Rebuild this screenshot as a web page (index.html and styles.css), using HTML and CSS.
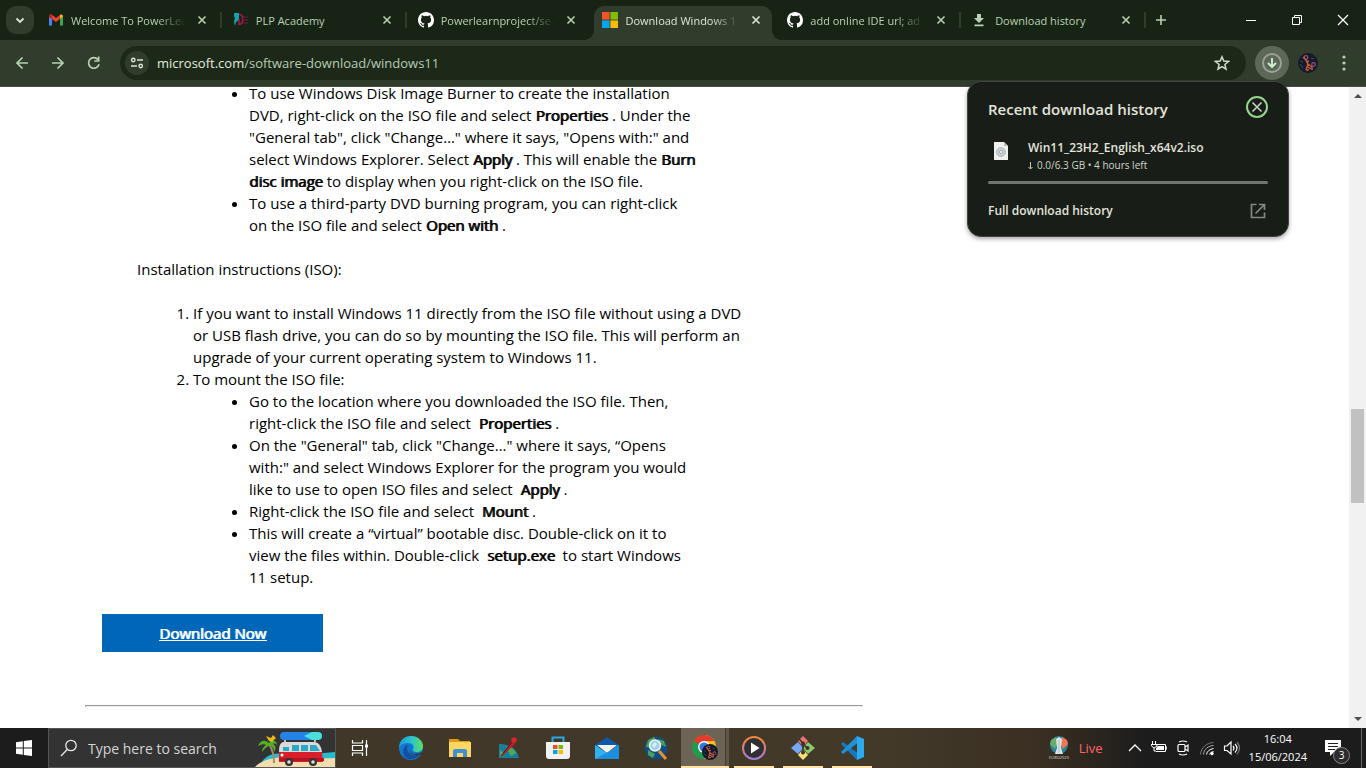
FILE: index.html
```html
<!DOCTYPE html>
<html lang="en">
<head>
<meta charset="utf-8">
<title>Download Windows 11</title>
<link rel="stylesheet" href="styles.css">
</head>
<body>
<svg class="defs" aria-hidden="true">
  <symbol id="github" viewBox="0 0 16 16"><path fill="#fff" d="M8 0C3.58 0 0 3.58 0 8c0 3.54 2.29 6.53 5.47 7.59.4.07.55-.17.55-.38 0-.19-.01-.82-.01-1.49-2.01.37-2.53-.49-2.69-.94-.09-.23-.48-.94-.82-1.13-.28-.15-.68-.52-.01-.53.63-.01 1.08.58 1.23.82.72 1.21 1.87.87 2.33.66.07-.52.28-.87.51-1.07-1.78-.2-3.64-.89-3.64-3.95 0-.87.31-1.59.82-2.15-.08-.2-.36-1.02.08-2.12 0 0 .67-.21 2.2.82a7.6 7.6 0 0 1 4 0c1.53-1.04 2.2-.82 2.2-.82.44 1.1.16 1.92.08 2.12.51.56.82 1.27.82 2.15 0 3.07-1.87 3.75-3.65 3.95.29.25.54.73.54 1.48 0 1.07-.01 1.93-.01 2.2 0 .21.15.46.55.38A8.01 8.01 0 0 0 16 8c0-4.42-3.58-8-8-8z"/></symbol>
  <symbol id="close" viewBox="0 0 16 16"><path d="M4.500 4.500l7 7m0-7l-7 7" stroke="currentColor" stroke-width="1.600" fill="none"/></symbol>
  <symbol id="avatar" viewBox="0 0 20 20"><circle cx="10" cy="10" r="10" fill="#161a2a"/><circle cx="8" cy="4.500" r="1.800" fill="none" stroke="#a04f74" stroke-width="1.200"/><circle cx="15.500" cy="11.500" r="1.800" fill="none" stroke="#a04f74" stroke-width="1.200"/><path d="M5 4l3 3 2 4-2 6M10 11l4 3v3M8 17h3M8 9l3-1m-1 6l3 2" fill="none" stroke="#c65f38" stroke-width="1.500"/><path d="M2 11l3 4m8-10l3 1M3 8l2 2" stroke="#31506c"/></symbol>
</svg>

<header class="tabstrip">
  <button class="tab-search" aria-label="Search tabs"><svg width="12" height="12" viewBox="0 0 12 12"><path d="M2.500 4.500L6 8l3.500-3.500" fill="none" stroke="#dbe6d6" stroke-width="1.800"/></svg></button>
  <nav class="tabs">
    <div class="tab">
      <svg class="fav" viewBox="0 0 16 16"><path fill="#4285f4" d="M1 4v9.500h3V7z"/><path fill="#34a853" d="M12 7v6.500h3V4z"/><path fill="#ea4335" d="M1 4.500C1 2.500 3 2 4.200 3L8 6l3.800-3v4L8 10 1 5z"/><path fill="#c5221f" d="M1 4.500C1 2.500 3 2 4 3v4.200L1 5z"/><path fill="#fbbc04" d="M12 2.900c1.500-1 3 0 3 1.600L12 7z"/></svg>
      <span class="title fade">Welcome To PowerLea</span><button class="x" aria-label="Close tab"><svg width="16" height="16"><use href="#close"/></svg></button>
    </div>
    <div class="tab">
      <svg class="fav" viewBox="0 0 16 16"><path fill="#12a4ac" d="M1 1h5v7L3 10l-1 4-1-5 1-3-1-2z"/><path d="M6 2.500c5 0 5 9 0 10V7" fill="none" stroke="#a01850" stroke-width="1.600"/><path d="M10 5h5M11 8h4m-5 3h5" stroke="#731940"/></svg>
      <span class="title">PLP Academy</span><button class="x" aria-label="Close tab"><svg width="16" height="16"><use href="#close"/></svg></button>
    </div>
    <div class="tab before-active">
      <svg class="fav"><use href="#github"/></svg>
      <span class="title fade">Powerlearnproject/se-</span><button class="x" aria-label="Close tab"><svg width="16" height="16"><use href="#close"/></svg></button>
    </div>
    <div class="tab active">
      <svg class="fav" viewBox="0 0 16 16"><path fill="#f35325" d="M0 0h7.600v7.600H0z"/><path fill="#81bc06" d="M8.400 0H16v7.600H8.400z"/><path fill="#05a6f0" d="M0 8.400h7.600V16H0z"/><path fill="#ffba08" d="M8.400 8.400H16V16H8.400z"/></svg>
      <span class="title fade">Download Windows 1</span><button class="x" aria-label="Close tab"><svg width="16" height="16"><use href="#close"/></svg></button>
    </div>
    <div class="tab">
      <svg class="fav"><use href="#github"/></svg>
      <span class="title fade">add online IDE url; ad</span><button class="x" aria-label="Close tab"><svg width="16" height="16"><use href="#close"/></svg></button>
    </div>
    <div class="tab">
      <svg class="fav" viewBox="0 0 16 16"><path fill="#b9d0b3" d="M5 2h4v4h3L7 11 2 6h3zM2.500 12.500h9v1.800h-9z"/></svg>
      <span class="title">Download history</span><button class="x" aria-label="Close tab"><svg width="16" height="16"><use href="#close"/></svg></button>
    </div>
  </nav>
  <button class="new-tab" aria-label="New tab"><svg width="12" height="12" viewBox="0 0 12 12"><path d="M6 1v10M1 6h10" stroke="#b9d0b3" stroke-width="1.600"/></svg></button>
  <div class="window-controls">
    <button aria-label="Minimize"><svg width="12" height="12"><path d="M1 6.500h10" stroke="#fff"/></svg></button>
    <button aria-label="Restore"><svg width="12" height="12"><path d="M1.500 3.500h7v7h-7zM3.500 3v-1.500h7v7H9" fill="none" stroke="#fff"/></svg></button>
    <button aria-label="Close"><svg width="12" height="12"><path d="M1 1l10 10M11 1L1 11" stroke="#fff" stroke-width="1.200"/></svg></button>
  </div>
</header>

<div class="toolbar">
  <div class="nav-buttons">
    <button aria-label="Back"><svg width="16" height="16"><path d="M14 8H3m5.500-5.500L3 8l5.500 5.500" fill="none" stroke="#b9d0b3" stroke-width="1.700"/></svg></button>
    <button aria-label="Forward"><svg width="16" height="16"><path d="M2 8h11M7.500 2.500L13 8l-5.500 5.500" fill="none" stroke="#b9d0b3" stroke-width="1.700"/></svg></button>
    <button aria-label="Reload"><svg width="16" height="16"><path d="M13 9.200A5.300 5.300 0 1 1 12 4.600" fill="none" stroke="#b9d0b3" stroke-width="1.700"/><path d="M13.500 1.500v5.300H8.300V5.200h3.600V1.500z" fill="#b9d0b3"/></svg></button>
  </div>
  <div class="omnibox">
    <button class="site-info" aria-label="View site information"><svg width="14" height="14" viewBox="0 0 14 14"><path d="M7 4h6M1 10h6" stroke="#dbe6d6" stroke-width="1.600"/><circle cx="3.300" cy="4" r="1.700" fill="none" stroke="#dbe6d6" stroke-width="1.400"/><circle cx="10.700" cy="10" r="1.700" fill="none" stroke="#dbe6d6" stroke-width="1.400"/></svg></button>
    <div class="url"><span class="host">microsoft.com</span>/software-download/windows11</div>
    <button class="star" aria-label="Bookmark this tab"><svg width="16" height="16" viewBox="0 0 16 16"><path d="M8 1.800l1.800 4.300 4.700.4-3.600 3 1.100 4.600L8 11.600l-4 2.500 1.100-4.600-3.600-3 4.700-.4z" fill="none" stroke="#d0dccb" stroke-width="1.500"/></svg></button>
  </div>
  <div class="tools">
    <button class="downloads" aria-label="Downloads"><svg width="20" height="20" viewBox="0 0 20 20"><circle cx="10" cy="10" r="9" fill="none" stroke="#99a397" stroke-width="2"/><path d="M10 5v9M6 10l4 4 4-4" fill="none" stroke="#d4f3d5" stroke-width="1.800"/></svg></button>
    <button class="profile" aria-label="Profile"><svg width="20" height="20"><use href="#avatar"/></svg></button>
    <button class="menu" aria-label="Menu"><svg width="4" height="16" fill="#b9d0b3"><circle cx="2" cy="2" r="1.600"/><circle cx="2" cy="8" r="1.600"/><circle cx="2" cy="14" r="1.600"/></svg></button>
  </div>
</div>

<div class="viewport">
  <main class="page">
    <article class="article">
      <ul class="inner">
        <li>To use Windows Disk Image Burner to create the installation<br>DVD, right-click on the ISO file and select <b>Properties</b> . Under the<br>"General tab", click "Change…" where it says, "Opens with:" and<br>select Windows Explorer. Select <b>Apply</b> . This will enable the <b>Burn<br>disc image</b> to display when you right-click on the ISO file.</li>
        <li>To use a third-party DVD burning program, you can right-click<br>on the ISO file and select <b>Open with</b> .</li>
      </ul>
      <p>Installation instructions (ISO):</p>
      <ol>
        <li>If you want to install Windows 11 directly from the ISO file without using a DVD<br>or USB flash drive, you can do so by mounting the ISO file. This will perform an<br>upgrade of your current operating system to Windows 11.</li>
        <li>To mount the ISO file:
          <ul>
            <li>Go to the location where you downloaded the ISO file. Then,<br>right-click the ISO file and select&nbsp; <b>Properties</b> .</li>
            <li>On the "General" tab, click "Change…" where it says, “Opens<br>with:" and select Windows Explorer for the program you would<br>like to use to open ISO files and select&nbsp; <b>Apply</b> .</li>
            <li>Right-click the ISO file and select&nbsp; <b>Mount</b> .</li>
            <li>This will create a “virtual” bootable disc. Double-click on it to<br>view the files within. Double-click&nbsp; <b>setup.exe</b>&nbsp; to start Windows<br>11 setup.</li>
          </ul>
        </li>
      </ol>
    </article>
    <a class="download-now" href="#">Download Now</a>
    <hr>
  </main>
  <div class="scrollbar" aria-hidden="true"><svg width="8" height="4"><path d="M0 4l4-4 4 4z" fill="#505050"/></svg><div class="track"><div class="thumb"></div></div><svg width="8" height="4"><path d="M0 0l4 4 4-4z" fill="#505050"/></svg></div>
</div>

<section class="popup" aria-label="Recent download history">
  <div class="popup-head"><h2>Recent download history</h2><button aria-label="Close"><svg width="22" height="22"><circle cx="11" cy="11" r="10" fill="none" stroke="#97d48f" stroke-width="2"/><path d="M6.500 6.500l9 9m0-9l-9 9" stroke="#c9d1c6" stroke-width="1.600"/></svg></button></div>
  <div class="file">
    <svg width="14" height="18" viewBox="0 0 14 18"><path d="M0 0h10l4 4v14H0z" fill="#f0f0ee"/><path d="M10 0v4h4z" fill="#b9b9b9"/><circle cx="7" cy="10" r="4.500" fill="#c8cfd2" stroke="#9aa2a6" stroke-width=".6"/><circle cx="7" cy="10" r="1.600" fill="#edf1f1" stroke="#8c9499" stroke-width=".6"/></svg>
    <div><div class="file-name">Win11_23H2_English_x64v2.iso</div><div class="file-status"><svg width="5" height="8"><path d="M2.500 0v7M.5 5l2 2 2-2" fill="none" stroke="#c3cbbf"/></svg>0.0/6.3 GB • 4 hours left</div></div>
  </div>
  <div class="progress"></div>
  <a class="full" href="#">Full download history<svg width="16" height="16"><path d="M6.500 1.500h-5v13h13v-5M9 1.500h5.500V7M14 2L5.500 10.500" fill="none" stroke="#858985" stroke-width="1.700"/></svg></a>
</section>

<footer class="taskbar">
  <button class="start" aria-label="Start"><svg width="16" height="16" fill="#fff"><path d="M0 2.200l6.800-.9v6.200H0zM7.800 1.100L16 0v7.500H7.800zM0 8.500h6.800v6.200L0 13.800zM7.800 8.500H16V16l-8.200-1.100z"/></svg></button>
  <label class="search">
    <svg class="lens" width="18" height="18"><circle cx="11" cy="6.500" r="5.200" fill="none" stroke="#e8e8e8" stroke-width="1.300"/><path d="M7.200 10.500L1 17" stroke="#e8e8e8" stroke-width="1.300"/></svg>
    <input type="text" placeholder="Type here to search" aria-label="Type here to search">
    <svg class="van" width="80" height="38" viewBox="0 0 80 38">
      <path d="M4 38C10 24 22 22 36 27l44-4v15z" fill="#25bcd0"/><path d="M0 38c8-9 24-10 36-10 20 0 30 2 44 1v9z" fill="#f3dcae"/>
      <path d="M14 15c4 6 5 12 5 19" fill="none" stroke="#a58a66" stroke-width="2"/>
      <path d="M14 14C9 10 5 12 3 17c4-2 6-2 8-1-3 2-4 4-4 7 3-4 5-5 8-7 3 2 4 4 4 7 3-4 1-7-1-8 2-1 3 0 4 1 0-4-3-5-6-4z" fill="#53ae24"/><path d="M14 12l-3-5 5 2 2-3 3 3-4 4z" fill="#e8bc18"/>
      <path d="M30 10v4m30-4v4" stroke="#bbb" stroke-width="2"/>
      <rect x="25" y="3" width="42" height="8" rx="4" fill="#2483e6"/><path d="M49 7l8-4h5q5 0 5 4t-5 4h-5z" fill="#4be1d8"/>
      <path d="M24 24c0-9 2-11 6-11h28c6 0 8 4 9 11l1 9H24z" fill="#d9202a"/><path d="M24 23c0-8 2-10 6-10h28c6 0 8 4 9 10z" fill="#d8dcdd"/>
      <path d="M37 16h7v6h-7zM46 16h7v6h-7zM55 16h6l4 6H55zM28 18h6v4h-6z" fill="#2ba9c4"/>
      <path d="M24 29h45v3H24z" fill="#b51420"/><circle cx="27" cy="26" r="1.500" fill="#fff"/>
      <circle cx="34" cy="33" r="4" fill="#333"/><circle cx="34" cy="33" r="1.800" fill="#ddd"/><circle cx="58" cy="33" r="4" fill="#333"/><circle cx="58" cy="33" r="1.800" fill="#ddd"/>
    </svg>
  </label>
  <nav class="apps">
    <button class="task-view" aria-label="Task View"><svg width="18" height="18" fill="none" stroke="#fff" stroke-width="1.200"><path d="M1.500 1v3h10V1M1.500 17v-3h10v3M1.500 6.500h10v5h-10zM15.500 1v16"/><path d="M14 5.500h3v3h-3z" fill="#fff" stroke="none"/></svg></button>
    <button aria-label="Edge"><svg width="24" height="24" viewBox="0 0 24 24"><defs><linearGradient id="e1"><stop stop-color="#1699df"/><stop offset=".6" stop-color="#31c9c1"/><stop offset="1" stop-color="#64dd58"/></linearGradient></defs><circle cx="12" cy="12" r="12" fill="#1175d1"/><path d="M0 12C0 4 6 0 12 0c7 0 12 5 12 10 0 4-3 6-6 6s-5-1-4-3c2-3-1-6-5-6-5 0-8 3-9 5z" fill="url(#e1)"/><path d="M8 12c0 5 5 8 10 7 2 0 3-1 4-2-3 5-8 7-12 6-5-1-7-7-5-11 1-2 3-3 5-3-1 1-2 2-2 3z" fill="#124f9c"/><path d="M11 10c-2 3 0 7 5 8 3 0 5-1 7-2l1 2-3 1c-7 1-13-3-10-9z" fill="#403728"/></svg></button>
    <button aria-label="File Explorer"><svg width="22" height="20" viewBox="0 0 22 20"><path d="M0 1h9l2 2h10v7H0z" fill="#dc9909"/><path d="M0 4h22v15H0z" fill="#ffd564"/><path d="M4 19v-6q0-2 2-2h10q2 0 2 2v6h-4v-4H8v4z" fill="#3b91d8"/></svg></button>
    <button aria-label="Map tool"><svg width="22" height="24" viewBox="0 0 22 24"><path d="M1 8c8 0 17 2 20 14H1z" fill="#187f9b"/><path d="M8 11c4-1 8 2 10 6l-5 3-3-5zM2 14l4 3-4 4z" fill="#56a55a"/><path d="M2 22L13 6l3-4 3 2-3 5z" fill="#bd1d24"/><circle cx="16" cy="4" r="2.700" fill="#d7252c"/><path d="M3 20L14 6" stroke="#60161c"/></svg></button>
    <button aria-label="Microsoft Store"><svg width="24" height="24" viewBox="0 0 24 24"><path d="M6.500 8V1.500h11V8" fill="none" stroke="#29a7df" stroke-width="2"/><path d="M0 6h24v14q0 3-3 3H3q-3 0-3-3z" fill="#f1f1f1"/><path fill="#f25022" d="M7 9h4.500v4H7z"/><path fill="#7fba00" d="M12.500 9H17v4h-4.500z"/><path fill="#00a4ef" d="M7 14h4.500v4H7z"/><path fill="#ffb900" d="M12.500 14H17v4h-4.500z"/></svg></button>
    <button aria-label="Mail"><svg width="24" height="24" viewBox="0 0 24 24"><path d="M0 9l12-8 12 8v3H0z" fill="#0f58a5"/><path d="M2 9h20l-10 8z" fill="#f3f3f3"/><path d="M0 9l12 8 12-8v14H0z" fill="#31b1ee"/><path d="M0 23l15-8 9-6v14z" fill="#1c90df"/></svg></button>
    <button aria-label="Globe search"><svg width="24" height="24" viewBox="0 0 24 24"><circle cx="12" cy="12" r="11.500" fill="#134c80"/><path d="M4 4l6-3 3 4-5 7-6-1zM14 3l6 2 2 6-6-3zM4 14l7 4-2 4-5-3z" fill="#4aa057"/><path d="M15 15l7 8" stroke="#e29332" stroke-width="3"/><circle cx="11" cy="9.500" r="5.500" fill="#9fd2ed" stroke="#eef3f5" stroke-width="1.500"/><path d="M8 9l3-3 2 2-3 4z" fill="#d8eef8"/></svg></button>
    <button class="open current" aria-label="Chrome"><svg width="27" height="26" viewBox="0 0 27 26"><path d="M12 12V0a12 12 0 0 1 0 24z" fill="#fbc116"/><path d="M12 12l6 3-6 9A12 12 0 0 1 1.600 6z" fill="#229c4b"/><path d="M12 12L1.600 6A12 12 0 0 1 22.400 6H12z" fill="#e33b2e"/><circle cx="12" cy="12" r="6" fill="#fff"/><circle cx="12" cy="12" r="4.600" fill="#3577e5"/><svg x="10" y="9" width="16" height="16"><use href="#avatar"/></svg></svg></button>
    <button class="open" aria-label="Media Player"><svg width="24" height="24" viewBox="0 0 24 24"><defs><linearGradient id="m1" x1="0" y1="0" x2="0" y2="1"><stop stop-color="#f58634"/><stop offset="1" stop-color="#a37ad8"/></linearGradient></defs><circle cx="12" cy="12" r="11" fill="#303033" stroke="url(#m1)" stroke-width="2"/><path d="M9 6.500l8.500 5.500L9 17.500z" fill="#fff"/></svg></button>
    <button class="open" aria-label="Git"><svg width="24" height="24" viewBox="0 0 24 24"><path d="M12 0l5 5-5 6-5-6z" fill="#ef7470"/><path d="M7 6l5 6-5 6-7-6z" fill="#76a8f8"/><path d="M17 6l7 6-7 6-5-6z" fill="#8ccb6c"/><path d="M12 13l5 6-5 5-5-5z" fill="#fbdf77"/><path d="M8 3l4 4v10M12 8l4 4" fill="none" stroke="#3b3327" stroke-width="1.600"/><circle cx="12" cy="7.500" r="2" fill="#3b3327"/><circle cx="12" cy="16.500" r="2" fill="#3b3327"/><circle cx="16.500" cy="12" r="2" fill="#3b3327"/></svg></button>
    <button class="open" aria-label="Visual Studio Code"><svg width="24" height="24" viewBox="0 0 24 24"><path fill="#1679bd" d="M3 6L1 8l16 16 2-6z"/><path fill="#2091d7" d="M3 18l-2-2L17 0l2 6z"/><path d="M17 0l7 3v18l-7 3z" fill="#2baaf1"/></svg></button>
  </nav>
  <div class="tray">
    <button class="news"><svg width="22" height="26" viewBox="0 0 22 26"><circle cx="11" cy="10" r="9" fill="#2e8194"/><path d="M3 5l5-3 2 6-3 6-5-5z" fill="#65ac6e"/><path d="M19 5l-5-3-2 6 3 6 5-5z" fill="#ed7653"/><path d="M8 4l3-2 3 2-1 9 2 6H7l2-6z" fill="#dbe7e5"/><path d="M11 5v13" stroke="#a2b9bd"/><text x="11" y="24" font-size="4" text-anchor="middle" fill="#ddd">EURO2020</text></svg><span>Live</span></button>
    <div class="icons">
      <svg width="16" height="16" fill="none" stroke="#fff" stroke-width="1.300"><path d="M2 11l6-6 6 6"/></svg>
      <svg width="16" height="16" fill="none" stroke="#fff"><path d="M6 4.500h8.500v7H5M14.500 7H16v2h-1.500M1.500 1v3M4.500 1v3M0 4.500h6V6L3 8 .5 6zM3 8v3h2"/><path d="M7 6h6v4H5V8z" fill="#fff" stroke="none"/></svg>
      <svg width="16" height="16" fill="none" stroke="#fff" stroke-width="1.200"><rect x="3" y="4.500" width="7" height="7" rx="1"/><path d="M10 7l3-2v6l-3-2M4 2q4-2 8 0M4 14q4 2 8 0"/></svg>
      <svg width="16" height="16" fill="none" stroke="#fff"><path d="M1.500 14.500C2 8 7 3 14.500 2.500" stroke="#777"/><path d="M4.500 14.500C5 9 9 6 14.500 5.500" stroke="#aaa"/><path d="M7.500 14.500q1-5 7-6M10.500 14.500q1-2.500 4-3"/><circle cx="13" cy="13.500" r="1.300" fill="#fff"/></svg>
      <svg width="18" height="16" fill="none" stroke="#fff" stroke-width="1.200"><path d="M1.500 6v4.500H4l4 3.500V2L4 6zM10 6q2 2 0 4.500M12 4q4 4 0 8.500"/><path d="M14 2q5 6 0 12.500" stroke="#777"/></svg>
    </div>
    <div class="clock"><time>16:04</time><span>15/06/2024</span></div>
    <button class="notify" aria-label="Notifications, 3 new"><svg width="16" height="16"><path d="M0 0h16v12H9l-4 4v-4H0z" fill="#fff"/><path d="M3 3.500h10M3 6.500h10M3 9.500h7" stroke="#222"/></svg><span class="badge">3</span></button>
    <button class="show-desktop" aria-label="Show desktop"></button>
  </div>
</footer>
</body>
</html>
```
FILE: styles.css
```css
* { box-sizing: border-box; }
html, body { height: 100%; }
body {
  margin: 0;
  display: flex;
  flex-direction: column;
  overflow: hidden;
  background: #fff;
  font-family: "Open Sans", "Noto Sans", sans-serif;
  position: relative;
}
button {
  border: 0;
  padding: 0;
  background: none;
  color: inherit;
  font: inherit;
  display: flex;
  align-items: center;
  justify-content: center;
}
svg { display: block; flex: none; }
.defs { position: absolute; width: 0; height: 0; }

/* Tab strip */
.tabstrip {
  flex: none;
  height: 40px;
  display: flex;
  align-items: center;
  background: #172314;
  color: #b9d0b3;
  padding-left: 6px;
}
.tab-search {
  width: 28px;
  height: 28px;
  border-radius: 10px;
  background: #303d2d;
  margin-right: 2px;
  flex: none;
}
.tabs { flex: 0 1 1109px; display: flex; align-self: stretch; align-items: flex-end; min-width: 0; }
.tab {
  flex: 1;
  min-width: 0;
  height: 34px;
  display: flex;
  align-items: center;
  padding: 0 11px 6px 12px;
  position: relative;
  font-size: 11px;
}
.tab:not(.active):not(.before-active)::after {
  content: "";
  position: absolute;
  right: -1px;
  top: 6px;
  width: 2px;
  height: 16px;
  background: #303d2d;
}
.fav { width: 16px; height: 16px; }
.title {
  flex: 1;
  min-width: 0;
  margin: 0 8px 0 7px;
  overflow: hidden;
  white-space: nowrap;
}
.fade {
  -webkit-mask-image: linear-gradient(to right, #000 75%, transparent);
  mask-image: linear-gradient(to right, #000 75%, transparent);
}
.x { width: 16px; height: 16px; flex: none; }
.active { color: #dbe6d6; }
.active::before {
  content: "";
  position: absolute;
  inset: 0 3px 0 4px;
  border-radius: 10px 10px 0 0;
  background: #303d2d;
}
.active::after {
  content: "";
  position: absolute;
  inset: auto -7px 0 -6px;
  height: 10px;
  background:
    radial-gradient(circle at 0 0, transparent 10px, #303d2d 10px) left / 10px 10px no-repeat,
    radial-gradient(circle at 100% 0, transparent 10px, #303d2d 10px) right / 10px 10px no-repeat;
}
.active > * { position: relative; }
.new-tab { width: 28px; height: 28px; flex: none; margin-left: 2px; }
.window-controls { display: flex; margin-left: auto; align-self: stretch; }
.window-controls button { width: 46px; }

/* Toolbar */
.toolbar {
  flex: none;
  height: 47px;
  display: flex;
  align-items: center;
  padding: 0 4px;
  background: #303d2d;
  border-bottom: 1px solid #434f40;
}
.nav-buttons { display: flex; margin-right: 8px; }
.nav-buttons button { width: 36px; height: 36px; }
.omnibox {
  flex: 1;
  min-width: 0;
  height: 34px;
  display: flex;
  align-items: center;
  padding: 0 16px 0 5px;
  border-radius: 17px;
  background: #1c2919;
  color: #b9c9b4;
  font-size: 13px;
}
.site-info { width: 24px; height: 24px; border-radius: 50%; background: #303d2d; }
.url { flex: 1; margin-left: 8px; }
.host { color: #e3ebdf; }
.tools { display: flex; align-items: center; margin-left: 9px; }
.tools button { width: 36px; height: 34px; }
.tools .downloads { width: 34px; border-radius: 50%; background: #5c6959; margin-right: 1px; }

/* Page */
.viewport { flex: 1; min-height: 0; display: flex; overflow: hidden; }
.page {
  flex: 1;
  min-width: 0;
  padding-left: 85px;
  margin-top: -5px;
  font-size: 15px;
  line-height: 22px;
  color: #000;
}
.article { padding-left: 52px; }
.article ul, .article ol { margin: 0; padding-left: 56px; }
.article ul { list-style: disc; }
.article .inner { padding-left: 112px; }
.article p { margin: 22px 0; }
.article b { font-weight: 400; text-shadow: 1px 0 currentColor; }
.download-now {
  display: block;
  width: 221px;
  margin: 26px 0 0 17px;
  padding: 8px 0;
  background: #0067b8;
  color: #fff;
  text-align: center;
  text-decoration: underline;
  text-shadow: 1px 0 currentColor;
}
hr {
  width: 778px;
  margin: 53px 0 0;
  border: 1px solid #9a9a9a;
  border-bottom-color: #eee;
  border-right-color: #eee;
}
.scrollbar {
  width: 17px;
  padding: 7px 0;
  display: flex;
  flex-direction: column;
  align-items: center;
  background: #f1f1f1;
}
.track { flex: 1; align-self: stretch; display: grid; grid-template-rows: 310fr 94fr 214fr; }
.thumb { grid-row: 2; margin: 0 2px; background: #c1c1c1; }

/* Download popup */
.popup {
  position: absolute;
  top: 81px;
  right: 77px;
  width: 322px;
  padding: 14px 20px 15px;
  border: 1px solid #41463f;
  border-radius: 14px;
  background: #191d17;
  color: #e1e4dc;
  box-shadow: 0 2px 4px rgba(0, 0, 0, .35);
}
.popup-head, .full { display: flex; align-items: center; justify-content: space-between; }
.popup h2 { margin: 0; font-size: 15px; font-weight: 600; line-height: 26px; }
.popup-head button { align-self: flex-start; }
.file { display: flex; align-items: flex-start; margin-top: 17px; gap: 20px; padding-left: 6px; }
.file > svg { margin-top: 3px; }
.file-name { font-size: 12px; font-weight: 600; line-height: 18px; }
.file-status { display: flex; align-items: center; gap: 4px; font-size: 10px; line-height: 17px; color: #d0d6cc; }
.progress { height: 3px; margin-top: 7px; border-radius: 2px; background: #70756e; }
.full { margin-top: 17px; font-size: 12px; font-weight: 600; line-height: 20px; color: inherit; text-decoration: none; }
.full svg { margin-right: 2px; }

/* Taskbar */
.taskbar {
  flex: none;
  height: 40px;
  display: flex;
  background: linear-gradient(to right, #1c1c1c 48px, #403728 336px, #423929 65%, #3a2f22 76%, #1c1c1c 84%);
  color: #fff;
}
.start { width: 48px; }
.search {
  width: 288px;
  display: flex;
  align-items: center;
  padding-left: 11px;
  border: 1px solid #555;
  background: #333;
}
.search input {
  flex: 1;
  min-width: 0;
  margin-left: 10px;
  padding: 0;
  border: 0;
  outline: 0;
  background: none;
  color: #fff;
  font: 14px "Open Sans", "Noto Sans", sans-serif;
}
.search input::placeholder { color: #d4d4d4; opacity: 1; }
.apps { display: flex; gap: 1px; }
.apps button { width: 48px; }
.apps .task-view { margin-right: 2px; }
.apps .open {
  background: linear-gradient(#ffe3a8, #ffe3a8) bottom / 40px 2px no-repeat;
}
.apps .current {
  background: linear-gradient(#ffe3a8, #ffe3a8) bottom / 48px 2px no-repeat, linear-gradient(to right, #6c6556 44px, #433c2e 44px, #433c2e 45px, #5e5748 45px);
}
.tray { margin-left: auto; display: flex; }
.news { gap: 9px; margin-right: 24px; font-size: 13px; color: #ff6464; }
.icons { display: flex; align-items: center; gap: 8px; }
.clock {
  display: flex;
  flex-direction: column;
  justify-content: center;
  text-align: center;
  margin-left: 8px;
  font-size: 11px;
  line-height: 18px;
}
.notify { width: 36px; margin-left: 11px; position: relative; }
.notify svg { margin-right: 6px; }
.badge {
  position: absolute;
  left: 15px;
  top: 19px;
  width: 17px;
  height: 17px;
  border: 1px solid #888;
  border-radius: 50%;
  background: #2c2c2c;
  font-size: 10px;
  line-height: 15px;
}
.show-desktop { width: 5px; border-left: 1px solid #666; margin-left: 7px; }
```
